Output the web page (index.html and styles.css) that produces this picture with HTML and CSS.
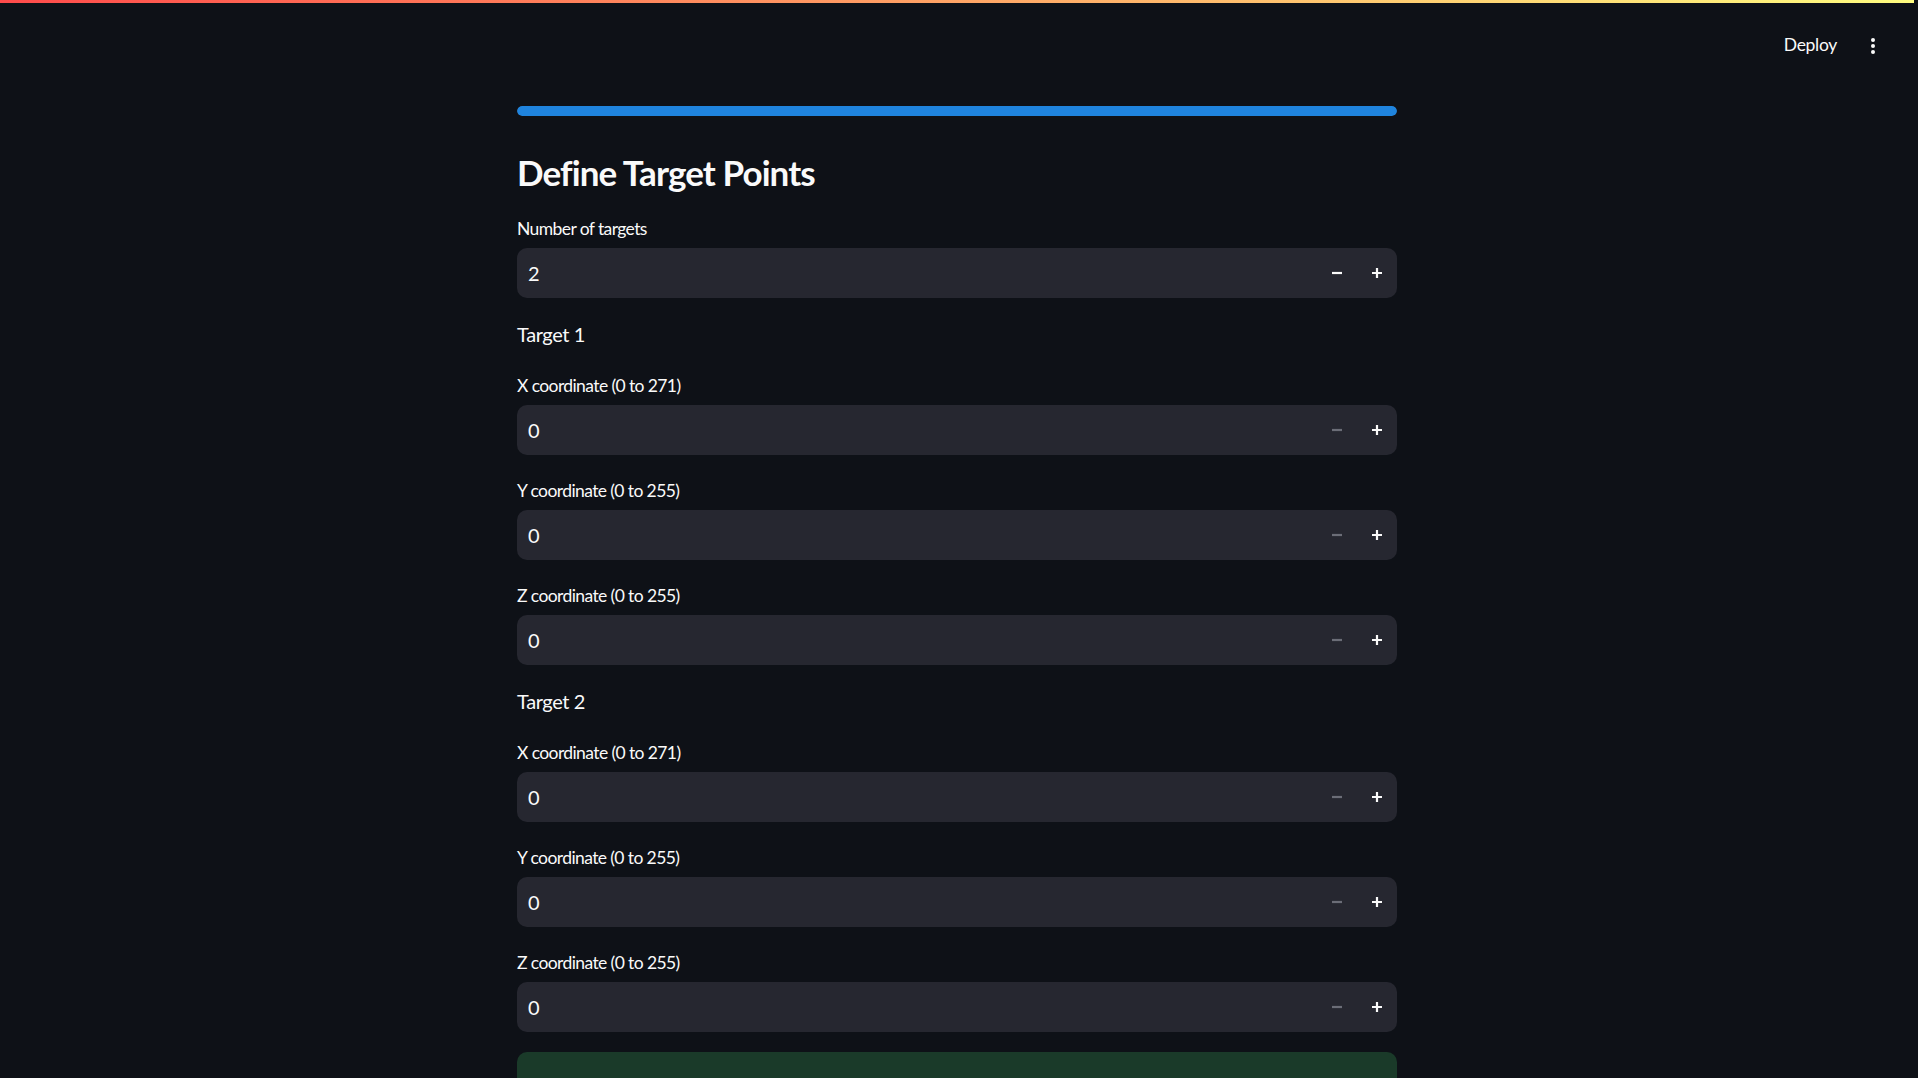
FILE: index.html
```html
<!DOCTYPE html>
<html lang="en">
<head>
<meta charset="utf-8">
<title>Define Target Points</title>
<link rel="stylesheet" href="styles.css">
</head>
<body>
<div class="app">
  <div class="decoration"></div>
  <header class="header">
    <span class="deploy">Deploy</span>
    <span class="kebab"><i></i><i></i><i></i></span>
  </header>
  <main class="main">
    <div class="block">
      <div class="progress"><div class="progress-fill"></div></div>
      <h3 class="title">Define Target Points</h3>

      <div class="field">
        <label class="label">Number of targets</label>
        <div class="input">
          <span class="value">2</span>
          <span class="step"><svg width="12" height="12" viewBox="0 0 12 12"><path d="M1 6h10" stroke="#fafafa" stroke-width="2.2"/></svg></span>
          <span class="step"><svg width="12" height="12" viewBox="0 0 12 12"><path d="M1 6h10M6 1v10" stroke="#fafafa" stroke-width="2.2"/></svg></span>
        </div>
      </div>

      <p class="md">Target 1</p>

      <div class="field">
        <label class="label">X coordinate (0 to 271)</label>
        <div class="input">
          <span class="value">0</span>
          <span class="step"><svg width="12" height="12" viewBox="0 0 12 12"><path d="M1 6h10" stroke="#6b6d77" stroke-width="2.2"/></svg></span>
          <span class="step"><svg width="12" height="12" viewBox="0 0 12 12"><path d="M1 6h10M6 1v10" stroke="#fafafa" stroke-width="2.2"/></svg></span>
        </div>
      </div>
      <div class="field">
        <label class="label">Y coordinate (0 to 255)</label>
        <div class="input">
          <span class="value">0</span>
          <span class="step"><svg width="12" height="12" viewBox="0 0 12 12"><path d="M1 6h10" stroke="#6b6d77" stroke-width="2.2"/></svg></span>
          <span class="step"><svg width="12" height="12" viewBox="0 0 12 12"><path d="M1 6h10M6 1v10" stroke="#fafafa" stroke-width="2.2"/></svg></span>
        </div>
      </div>
      <div class="field">
        <label class="label">Z coordinate (0 to 255)</label>
        <div class="input">
          <span class="value">0</span>
          <span class="step"><svg width="12" height="12" viewBox="0 0 12 12"><path d="M1 6h10" stroke="#6b6d77" stroke-width="2.2"/></svg></span>
          <span class="step"><svg width="12" height="12" viewBox="0 0 12 12"><path d="M1 6h10M6 1v10" stroke="#fafafa" stroke-width="2.2"/></svg></span>
        </div>
      </div>

      <p class="md">Target 2</p>

      <div class="field">
        <label class="label">X coordinate (0 to 271)</label>
        <div class="input">
          <span class="value">0</span>
          <span class="step"><svg width="12" height="12" viewBox="0 0 12 12"><path d="M1 6h10" stroke="#6b6d77" stroke-width="2.2"/></svg></span>
          <span class="step"><svg width="12" height="12" viewBox="0 0 12 12"><path d="M1 6h10M6 1v10" stroke="#fafafa" stroke-width="2.2"/></svg></span>
        </div>
      </div>
      <div class="field">
        <label class="label">Y coordinate (0 to 255)</label>
        <div class="input">
          <span class="value">0</span>
          <span class="step"><svg width="12" height="12" viewBox="0 0 12 12"><path d="M1 6h10" stroke="#6b6d77" stroke-width="2.2"/></svg></span>
          <span class="step"><svg width="12" height="12" viewBox="0 0 12 12"><path d="M1 6h10M6 1v10" stroke="#fafafa" stroke-width="2.2"/></svg></span>
        </div>
      </div>
      <div class="field">
        <label class="label">Z coordinate (0 to 255)</label>
        <div class="input">
          <span class="value">0</span>
          <span class="step"><svg width="12" height="12" viewBox="0 0 12 12"><path d="M1 6h10" stroke="#6b6d77" stroke-width="2.2"/></svg></span>
          <span class="step"><svg width="12" height="12" viewBox="0 0 12 12"><path d="M1 6h10M6 1v10" stroke="#fafafa" stroke-width="2.2"/></svg></span>
        </div>
      </div>

      <div class="alert"></div>
    </div>
  </main>
</div>
</body>
</html>
```
FILE: styles.css
```css
* { box-sizing: border-box; }
html, body {
  margin: 0;
  height: 100%;
  overflow: hidden;
  background: #0e1117;
}
body {
  font-family: Lato, "Noto Sans", sans-serif;
  color: #fafafa;
}
.app {
  height: 100vh;
  overflow: hidden;
  padding-right: 4px;
}
.decoration {
  height: 3px;
  background: linear-gradient(90deg, #ff4b4b, #fffd80);
}
.header {
  height: 72px;
  display: flex;
  justify-content: flex-end;
  align-items: center;
  padding-right: 39px;
  padding-top: 12px;
  gap: 34px;
}
.deploy {
  font-size: 17.5px;
  line-height: 20px;
  letter-spacing: -0.3px;
  color: #fafafa;
}
.kebab {
  display: flex;
  flex-direction: column;
  gap: 2px;
  padding-top: 1px;
}
.kebab i {
  display: block;
  width: 4px;
  height: 4px;
  border-radius: 50%;
  background: #fafafa;
}
.main {
  padding-top: 31px;
}
.block {
  width: 880px;
  margin: 0 auto;
  display: flex;
  flex-direction: column;
  gap: 20px;
}
.progress {
  height: 10px;
  border-radius: 5px;
  background: #262730;
  overflow: hidden;
}
.progress-fill {
  height: 100%;
  width: 100%;
  background: #1f84de;
  border-radius: 5px;
}
.title {
  margin: 0;
  padding-top: 15px;
  font-size: 35px;
  line-height: 42px;
  font-weight: 700;
  letter-spacing: -0.9px;
}
.field {
  display: flex;
  flex-direction: column;
}
.label {
  height: 30px;
  margin-bottom: 5px;
  display: flex;
  align-items: center;
  font-size: 17.5px;
  letter-spacing: -0.6px;
}
.input {
  height: 50px;
  background: #262730;
  border-radius: 10px;
  display: flex;
  align-items: center;
}
.value {
  flex: 1;
  padding-left: 11px;
  font-size: 20px;
}
.step {
  width: 40px;
  height: 100%;
  display: flex;
  align-items: center;
  justify-content: center;
}
.md {
  margin: 0;
  font-size: 20px;
  line-height: 32px;
  letter-spacing: -0.4px;
}
.alert {
  height: 80px;
  background: #1a3a29;
  border-radius: 10px;
}
```
